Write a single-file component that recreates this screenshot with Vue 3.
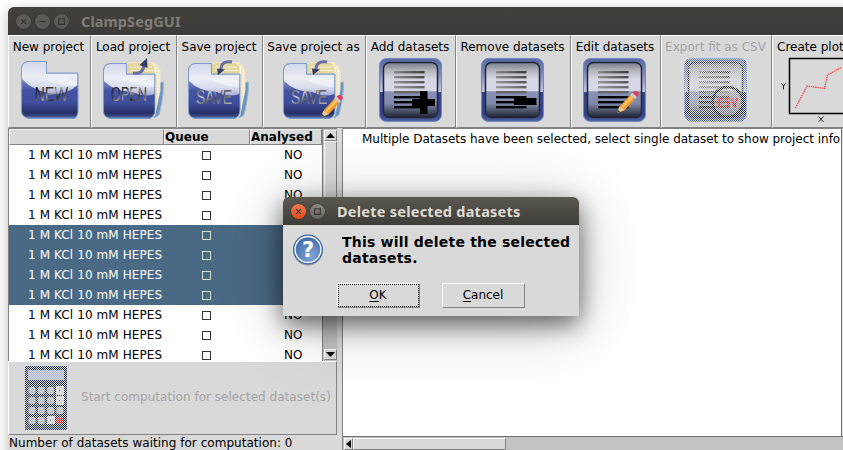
<script setup>
const tools = [
  { id: 'new', label: 'New project', x: 8, w: 83 },
  { id: 'load', label: 'Load project', x: 91, w: 86 },
  { id: 'save', label: 'Save project', x: 177, w: 86 },
  { id: 'saveas', label: 'Save project as', x: 263, w: 103 },
  { id: 'add', label: 'Add datasets', x: 366, w: 90 },
  { id: 'remove', label: 'Remove datasets', x: 456, w: 115 },
  { id: 'edit', label: 'Edit datasets', x: 571, w: 90 },
  { id: 'csv', label: 'Export fit as CSV', x: 661, w: 111, disabled: true },
  { id: 'plot', label: 'Create plots', x: 772, w: 85 }
]
const folderX = { load: 0, save: 85, saveas: 180 }
const folderText = { load: 'OPEN', save: 'SAVE', saveas: 'SAVE' }
const sheetX = { add: 379, remove: 481, edit: 583, csv: 684 }
const lines = [14, 19, 24, 29, 34, 39, 44, 49]
const rows = Array.from({ length: 11 }, (_, i) => ({ name: '1 M KCl 10 mM HEPES', selected: i > 3 && i < 8 }))
const keys = [0, 1, 2, 3].flatMap(r => [0, 1, 2, 3].map(c => ({ r, c })))
const keyFill = (r, c) => (r === 3 && c === 3 ? '#ff1010' : '#aeb4c0')
</script>

<template>
  <div class="desktop">
    <svg class="defs" width="0" height="0">
      <defs>
        <linearGradient id="gFolder" x1="0" y1="0" x2="0" y2="1">
          <stop offset="0" stop-color="#aab6dc" /><stop offset=".3" stop-color="#8592c8" />
          <stop offset=".5" stop-color="#4353a3" /><stop offset=".72" stop-color="#3f4e9c" />
          <stop offset=".9" stop-color="#262f66" /><stop offset=".96" stop-color="#3d4c86" /><stop offset="1" stop-color="#7a93c8" />
        </linearGradient>
        <linearGradient id="gGloss" x1="0" y1="0" x2="0" y2="1">
          <stop offset="0" stop-color="#d3d8ea" /><stop offset=".45" stop-color="#eceef7" /><stop offset=".75" stop-color="#d9dcec" /><stop offset="1" stop-color="#a4abd0" />
        </linearGradient>
        <linearGradient id="gText" x1="0" y1="0" x2="1" y2="1">
          <stop offset="0" stop-color="#111" /><stop offset=".35" stop-color="#333" /><stop offset=".5" stop-color="#aaa" /><stop offset=".65" stop-color="#222" /><stop offset="1" stop-color="#ddd" />
        </linearGradient>
        <linearGradient id="gSave" x1="0" y1="0" x2="1" y2="1">
          <stop offset="0" stop-color="#222" /><stop offset=".35" stop-color="#ccc" /><stop offset=".55" stop-color="#555" /><stop offset="1" stop-color="#ccc" />
        </linearGradient>
        <linearGradient id="gFrame" x1="0" y1="0" x2="0" y2="1">
          <stop offset="0" stop-color="#5668a4" /><stop offset=".25" stop-color="#7f8bbd" /><stop offset=".53" stop-color="#c2c8e2" />
          <stop offset=".54" stop-color="#35438a" /><stop offset=".9" stop-color="#35438a" /><stop offset="1" stop-color="#5065a2" />
        </linearGradient>
        <linearGradient id="gSheet" x1="0" y1="0" x2="0" y2="1">
          <stop offset="0" stop-color="#777b85" /><stop offset=".15" stop-color="#b4b6be" /><stop offset=".3" stop-color="#d5d7e4" />
          <stop offset=".52" stop-color="#d6d8e9" /><stop offset=".53" stop-color="#8a93b6" /><stop offset=".75" stop-color="#7f88a8" />
          <stop offset=".92" stop-color="#3c4256" /><stop offset="1" stop-color="#1d2435" />
        </linearGradient>
        <linearGradient id="gLine" x1="0" y1="0" x2="1" y2="0">
          <stop offset="0" stop-color="#888" /><stop offset="1" stop-color="#3c3c3c" />
        </linearGradient>
        <radialGradient id="gAsk" cx=".6" cy=".75" r=".8">
          <stop offset="0" stop-color="#85a8d5" /><stop offset="1" stop-color="#3b68a8" />
        </radialGradient>
        <g id="pencil">
          <path d="M0 21 L3 14 L14 2 L19 6 L8 18 Z" fill="#f39a26" />
          <path d="M5 14 L14 4 L16 6 L6 16Z" fill="#ffc667" />
          <path d="M0 21 L2.5 14.5 L8 18Z" fill="#edc995" /><path d="M0 21 L1 18 L3 19.5Z" fill="#333" />
          <path d="M13 3 L15.500 .5 L20 4.500 L18 7Z" fill="#c9cbd0" />
          <path d="M15.500 .5 Q18 -2 21 0 Q23 2 20 5Z" fill="#e23c5c" />
        </g>
      </defs>
    </svg>

    <main class="window">
      <header class="titlebar">
        <i class="wbtn"><svg viewBox="0 0 16 16"><path d="M5.500 5.500l5 5m0-5l-5 5" /></svg></i>
        <i class="wbtn"><svg viewBox="0 0 16 16"><path d="M4.500 8h7" /></svg></i>
        <i class="wbtn"><svg viewBox="0 0 16 16"><path d="M5 5h6v6H5z" /></svg></i>
        <span class="wtitle">ClampSegGUI</span>
      </header>

      <nav class="toolbar">
        <button v-for="t in tools" :key="t.id" class="tool" :class="[t.id, { disabled: t.disabled }]" :style="{ width: t.w + 'px' }">
          <span class="tlabel">{{ t.label }}</span>
          <svg class="ticon" :width="t.w - 2" height="71" :viewBox="`${t.x + 1} 55 ${t.w - 2} 71`">
            <g v-if="t.id === 'new'">
              <path d="M28 61.500H46.500V73H78V112Q78 115 75 118.500H29Q21.500 117 21.500 111V68Q22 62 28 61.500Z" fill="url(#gFolder)" />
              <path d="M28 62H46V73.500H77.500V85Q68 94 54 94Q34 92 22 79V68Q22.500 63 28 62Z" fill="url(#gGloss)" />
              <path d="M45 79Q60 76 77 81V86Q60 87 45 79Z" fill="#fff" opacity=".45" />
              <path d="M28 61.500H46.500V73H78V112Q78 115 75 118.500H29Q21.500 117 21.500 111V68Q22 62 28 61.500Z" fill="none" stroke="#7c9ccb" />
              <text x="34.500" y="101" class="ftext" textLength="33.500" lengthAdjust="spacingAndGlyphs" fill="url(#gText)">NEW</text>
            </g>
            <g v-else-if="t.id in folderX" :transform="`translate(${folderX[t.id]} 0)`">
              <path d="M156 83L163.500 82Q164 95 159 115L154 118Z" fill="#6d95c1" stroke="#9cb8d6" />
              <path d="M127 64Q128 61.500 133 62H154L158 66L160.500 70V90L155 116H127Z" fill="#f1e7c5" />
              <path d="M127 74V65Q128 63 132 63H151L154 67V74Z" fill="#e6d6a0" />
              <path d="M130 67H152M130 70.500H153" stroke="#f7efd2" />
              <path d="M155.500 67V112M158.500 70V97" stroke="#fffdf2" stroke-dasharray="2 1" />
              <path d="M110 63.500H126.500V74H155V110Q155 116 150 118.500H110Q103.500 117 103.500 111V70Q104 64 110 63.500Z" fill="url(#gFolder)" />
              <path d="M110 64H126V74.500H154.500V94Q144 98 132 92Q115 92 104 81V70Q104.500 65 110 64Z" fill="url(#gGloss)" />
              <path d="M125 79Q140 76 154 81V87Q140 87 125 79Z" fill="#fff" opacity=".45" />
              <path d="M110 63.500H126.500V74H155V110Q155 116 150 118.500H110Q103.500 117 103.500 111V70Q104 64 110 63.500Z" fill="none" stroke="#7c9ccb" />
              <template v-if="t.id === 'load'">
                <path d="M133 73Q143 75 144 65" fill="none" stroke="#6771a1" stroke-width="3" />
                <path d="M139.500 65L147 58L147.500 68Z" fill="#343e68" />
              </template>
              <template v-else>
                <path d="M147 62Q136 60 136 70" fill="none" stroke="#6771a1" stroke-width="3" />
                <path d="M132 68.500L140 69.500L133 75Z" fill="#343e68" />
              </template>
              <text x="111" :y="t.id === 'load' ? 101 : 103.500" class="ftext" textLength="36" lengthAdjust="spacingAndGlyphs" :fill="t.id === 'load' ? 'url(#gText)' : 'url(#gSave)'">{{ folderText[t.id] }}</text>
              <use v-if="t.id === 'saveas'" href="#pencil" x="141" y="96" />
            </g>
            <g v-else-if="t.id in sheetX" :transform="`translate(${sheetX[t.id]} 58)`">
              <rect x=".5" y=".5" width="62" height="63" rx="7" fill="url(#gFrame)" stroke="#7388bd" />
              <rect x="4.500" y="4.500" width="54" height="55" rx="6" fill="url(#gSheet)" stroke="#222735" stroke-width="1.500" />
              <rect v-for="(y, i) in lines" :key="y" x="15" :y="y - 1" width="30.500" height="2.400" :fill="i < 4 ? 'url(#gLine)' : i === 4 ? '#666' : '#050505'" :opacity="i < 4 ? 1 - i * .08 : 1" />
              <path v-if="t.id === 'add'" d="M41 33h7.500v8H56v7h-7.500v8H41v-8h-8v-7h8z" fill="#000" />
              <path v-if="t.id === 'remove'" d="M33 40h22.500v7H33z" fill="#000" />
              <use v-if="t.id === 'edit'" href="#pencil" x="34" y="34" />
              <template v-if="t.id === 'csv'">
                <circle cx="43.700" cy="44" r="15" fill="#aaa" fill-opacity=".4" stroke="#000" stroke-width="2.400" />
                <text x="33" y="49" class="csvtext" textLength="21" lengthAdjust="spacingAndGlyphs">CSV</text>
              </template>
            </g>
            <g v-else>
              <path d="M870 58.500H789.500V113.500H870" fill="none" stroke="#000" stroke-width="1.500" />
              <path d="M795.500 108L807 86L824.500 88.500L827.500 75L841 67.500" fill="none" stroke="#f33" stroke-width="1.100" stroke-dasharray="1.500 .7" />
              <path d="M781.500 83.500L783.500 86L785.500 83.500M783.500 86V89.500M818.500 116.500L823.500 122M823.500 116.500L818.500 122" fill="none" stroke="#222" />
            </g>
          </svg>
        </button>
      </nav>

      <div class="content">
        <aside class="left">
          <div class="tablewrap">
            <div class="table">
              <div class="thead"><b class="c1"></b><b class="c2">Queue</b><b class="c3">Analysed</b></div>
              <div v-for="(r, i) in rows" :key="i" class="row" :class="{ selected: r.selected }">
                <span class="c1">{{ r.name }}</span><span class="c2"><i class="check"></i></span><span class="c3">NO</span>
              </div>
            </div>
            <div class="vscroll">
              <i class="sb"><svg width="9" height="5"><path d="M4.500 0L9 5H0Z" /></svg></i>
              <i class="thumb"></i><i class="trough"></i>
              <i class="sb"><svg width="9" height="5"><path d="M0 0H9L4.500 5Z" /></svg></i>
            </div>
          </div>
          <button class="compute">
            <span class="calc">
              <svg class="stipple" width="42" height="64" viewBox="0 0 42 64">
                <rect width="42" height="64" fill="#1d2b48" />
                <rect x="3" y="4" width="36" height="10" fill="#a5b7d6" />
                <rect v-for="k in keys" :key="k.r * 4 + k.c" :x="3.500 + k.c * 9.300" :y="21 + k.r * 10" width="7" height="7" rx="2" :fill="keyFill(k.r, k.c)" />
              </svg>
              <svg class="bright" width="42" height="64" viewBox="0 0 42 64">
                <path d="M31 20h8v9h-8zM31 30h8v9h-8zM22 50h8v8h-8z" fill="#dcdcdc" />
                <path d="M34 24.500h1M34 34.500h1M25 54.500h1" stroke="#777" />
              </svg>
            </span>
            <span class="clabel">Start computation for selected dataset(s)</span>
          </button>
          <div class="status">Number of datasets waiting for computation: 0</div>
        </aside>
        <section class="right">
          <div class="view">
            <div class="info"><span>Multiple Datasets have been selected, select single dataset to show project info</span></div>
            <div class="rscroll"></div>
          </div>
          <div class="hscroll">
            <i class="hb"><svg width="5" height="8"><path d="M5 0V8L0 4Z" /></svg></i>
            <i class="hthumb"></i>
          </div>
        </section>
      </div>
    </main>

    <div class="dialog">
      <header class="dtitle">
        <i class="wbtn close"><svg viewBox="0 0 16 16"><path d="M5.500 5.500l5 5m0-5l-5 5" /></svg></i>
        <i class="wbtn"><svg viewBox="0 0 16 16"><path d="M5 5h6v6H5z" /></svg></i>
        <span>Delete selected datasets</span>
      </header>
      <div class="dbody">
        <div class="dmsg">
          <svg width="32" height="32" viewBox="0 0 32 32">
            <ellipse cx="16" cy="17" rx="14.500" ry="14.500" fill="#999" />
            <circle cx="16" cy="15.500" r="14.300" fill="#fff" stroke="#3465a4" stroke-width="1.300" />
            <circle cx="16" cy="15.500" r="12.300" fill="url(#gAsk)" />
            <text x="16" y="23.300" text-anchor="middle" class="ask">?</text>
          </svg>
          <p><span>This will delete the selected</span><br>datasets.</p>
        </div>
        <div class="dbtns">
          <button class="focus"><span><u>O</u>K</span></button>
          <button><span><u>C</u>ancel</span></button>
        </div>
      </div>
    </div>
  </div>
</template>

<style>
html, body { margin: 0; overflow: hidden; }
</style>

<style scoped>
.desktop { position: relative; width: 843px; height: 450px; overflow: hidden; box-sizing: border-box; padding: 7px 0 0 8px; background: #fff; font: 12px/15px "DejaVu Sans", sans-serif; color: #000; }
.desktop * { box-sizing: border-box; }
.defs { position: absolute; }
button { appearance: none; margin: 0; padding: 0; border-radius: 0; background: #d9d9d9; font: inherit; color: inherit; border: 1px solid; border-color: #fff #828282 #828282 #fff; }
.window { width: 860px; height: 460px; display: flex; flex-direction: column; background: #d9d9d9; border-radius: 6px 0 0 0; box-shadow: 0 3px 14px rgba(0,0,0,.25); }
.titlebar { height: 28px; flex: none; display: flex; align-items: center; gap: 4px; padding: 1px 0 0 8px; border-radius: 6px 0 0 0; background: linear-gradient(#42413c, #3c3b37); }
.wbtn { width: 15px; height: 15px; border-radius: 50%; background: #5c5a54; box-shadow: 0 0 0 .5px #33322e; }
.wbtn svg { display: block; width: 15px; height: 15px; fill: none; stroke: #34332f; stroke-width: 1.2; }
.wtitle { margin: 0 0 2px 8px; font: 700 14.500px/20px "Noto Sans", sans-serif; letter-spacing: .1px; color: #807d78; white-space: nowrap; }
.toolbar { height: 93px; flex: none; display: flex; }
.tool { flex: none; height: 93px; display: flex; flex-direction: column; align-items: center; overflow: hidden; }
.tlabel { height: 19px; line-height: 23px; white-space: nowrap; padding-right: 2px; }
.disabled .tlabel { color: #a3a3a3; }
.ticon { display: block; flex: none; }
.disabled .ticon, .stipple { -webkit-mask: repeating-conic-gradient(#000 0 25%, transparent 0 50%) 0 0 / 2px 2px; mask: repeating-conic-gradient(#000 0 25%, transparent 0 50%) 0 0 / 2px 2px; }
.ftext { font: 20px "Liberation Sans", sans-serif; }
.csvtext { font: 700 13px "DejaVu Sans", sans-serif; fill: #f00; }
.content { display: flex; height: 322px; }
.left { width: 334px; flex: none; display: flex; flex-direction: column; }
.tablewrap { display: flex; width: 329px; height: 233px; flex: none; border-left: 1px solid #828282; border-top: 1px solid #828282; }
.table { width: 313px; height: 232px; background: #fff; overflow: hidden; }
.thead { display: flex; height: 16px; }
.thead b { height: 16px; line-height: 15px; background: #d9d9d9; border: 1px solid; border-color: #fff #828282 #828282 #fff; border-top-color: #eee; white-space: nowrap; overflow: hidden; }
.c1 { width: 155px; flex: none; }
.c2 { width: 86px; flex: none; }
.c3 { width: 72px; flex: none; }
.row { height: 20px; display: flex; line-height: 20px; white-space: nowrap; }
.row .c1 { padding-left: 19px; letter-spacing: .1px; }
.row .c2 { padding: 6px 0 0 38px; }
.row .c3 { padding-left: 34px; }
.check { display: block; width: 9px; height: 9px; border: 1px solid #333; }
.selected { background: #4a6984; color: #fff; }
.selected .check { border-color: #d5dcc4; }
.vscroll { width: 15px; border-left: 1px solid #828282; padding: 1px 0 1px 1px; background: #c3c3c3; display: flex; flex-direction: column; }
.sb { height: 11px; flex: none; display: flex; align-items: center; justify-content: center; background: #d9d9d9; border: 1px solid; border-color: #fff #828282 #828282 #fff; }
.thumb { height: 120px; background: #d9d9d9; border: 1px solid; border-color: #fff #828282 #828282 #fff; }
.trough { flex: 1; }
.compute { width: 329px; height: 74px; flex: none; display: flex; align-items: center; padding-left: 16px; color: #a3a3a3; gap: 14px; text-align: left; }
.calc { position: relative; width: 42px; height: 64px; flex: none; margin-top: -1px; }
.calc svg { display: block; }
.bright { position: absolute; left: 0; top: 0; }
.clabel { white-space: nowrap; margin-top: -2px; letter-spacing: .03px; }
.status { height: 15px; line-height: 17px; padding-left: 1px; white-space: nowrap; letter-spacing: .03px; }
.right { width: 520px; flex: none; border-left: 1px solid #828282; border-top: 1px solid #828282; }
.view { display: flex; height: 307px; }
.info { width: 498px; background: #fff; overflow: hidden; white-space: nowrap; padding: 3px 0 0 19px; letter-spacing: -.03px; }
.rscroll { width: 20px; border-left: 1px solid #707070; background: #e4e4e4; }
.hscroll { height: 20px; display: flex; background: #c3c3c3; border-top: 1px solid #707070; padding: 1px 0 0 1px; }
.hb { width: 9px; height: 12px; display: flex; align-items: center; justify-content: center; background: #d9d9d9; border: 1px solid; border-color: #fff #828282 #828282 #fff; }
.hthumb { width: 153px; height: 12px; background: #d9d9d9; border: 1px solid; border-color: #fff #828282 #828282 #fff; }
.dialog { position: absolute; left: 283px; top: 197px; width: 296px; height: 119px; background: #d9d9d9; border-radius: 6px 6px 0 0; box-shadow: 0 8px 26px rgba(0,0,0,.6), 0 8px 70px rgba(0,0,0,.2); }
.dtitle { height: 28px; display: flex; align-items: center; gap: 4px; padding: 0 0 0 8px; border-radius: 6px 6px 0 0; background: linear-gradient(#5b5850, #3e3d38); }
.dtitle .wbtn { background: linear-gradient(#8a8881, #65635c); }
.dtitle .close { background: linear-gradient(#f4794e, #df4a16); }
.dtitle span { margin: 0 0 1px 8px; font: 700 14.500px/20px "Noto Sans", sans-serif; letter-spacing: .25px; color: #dfdbd2; white-space: nowrap; }
.dbody { padding: 9px 0 0 9px; }
.dmsg { display: flex; gap: 18px; height: 49px; }
.dmsg p { margin: 0; font-weight: 700; font-size: 14px; letter-spacing: .21px; line-height: 16px; white-space: nowrap; }
.ask { font: 700 21px "DejaVu Sans", sans-serif; fill: #fff; }
.dbtns { display: flex; gap: 22px; padding-left: 45px; }
.dbtns button { width: 83px; height: 25px; line-height: 20px; padding: 0 1px 2px 0; }
.dbtns .focus { outline: 1px dotted #000; outline-offset: -2px; }
u { text-underline-offset: 2px; }
</style>
